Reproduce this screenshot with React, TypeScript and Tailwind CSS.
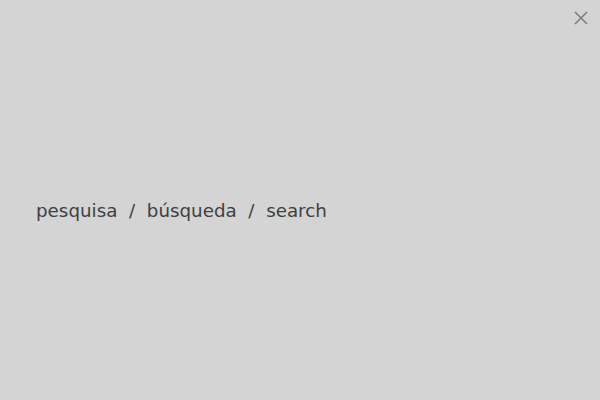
export default function App() {
  return (
    <main
      className="relative flex h-[400px] w-[600px] items-center bg-[#d4d4d4] pl-[36px] pt-[22px] text-[#404040]"
      style={{ fontFamily: '"DejaVu Sans", sans-serif' }}
    >
      {/* close button */}
      <button className="absolute right-[12px] top-[11px] text-[#7a7a7a]" aria-label="close">
        <svg width="14" height="14" viewBox="0 0 14 14" fill="none" stroke="currentColor" strokeWidth="1.5">
          <path d="M1 1L13 13M13 1L1 13" />
        </svg>
      </button>

      <p className="text-[18.3px] whitespace-pre">pesquisa  /  búsqueda  /  search</p>
    </main>
  )
}
